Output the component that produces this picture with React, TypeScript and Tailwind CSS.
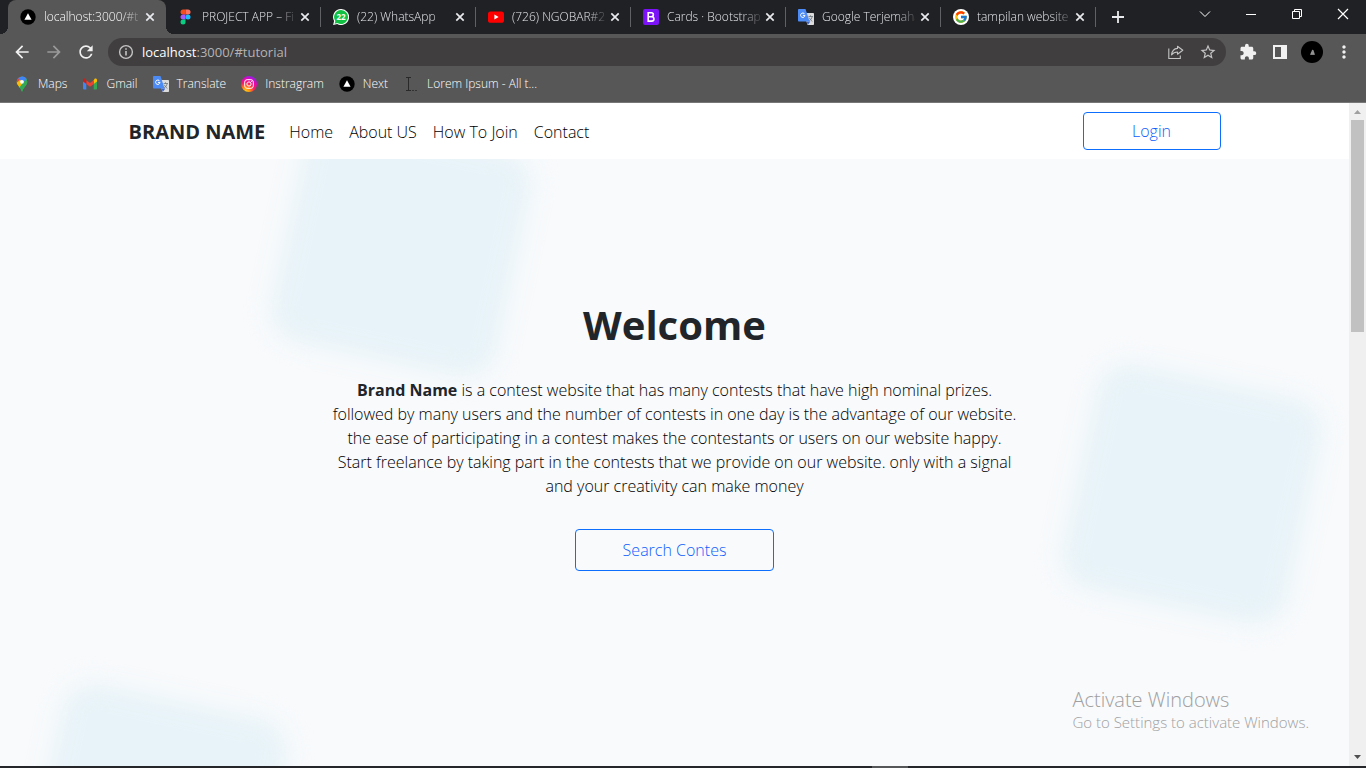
import type { ReactNode } from "react";
import { FcGoogle } from "react-icons/fc";
import { MdArrowBack, MdArrowForward, MdExtension, MdMoreVert, MdRefresh, MdStarBorder } from "react-icons/md";

function NextIcon() {
  return (
    <svg viewBox="0 0 16 16" className="size-4 shrink-0" aria-hidden="true">
      <circle cx="8" cy="8" r="7.7" fill="#000" />
      <path d="M8 4.2 11.6 10.8H4.4Z" fill="#fff" />
    </svg>
  );
}

function FigmaIcon() {
  return (
    <svg viewBox="0 0 16 16" className="size-4 shrink-0" aria-hidden="true">
      <path d="M7.500 .5H5a2.500 2.500 0 0 0 0 5h2.500Z" fill="#f24e1e" />
      <path d="M7.500 .5H10a2.500 2.500 0 0 1 0 5H7.500Z" fill="#ff7262" />
      <path d="M7.500 5.500H5a2.500 2.500 0 0 0 0 5h2.500Z" fill="#a259ff" />
      <circle cx="10" cy="8" r="2.500" fill="#1abcfe" />
      <path d="M7.500 10.500H5A2.500 2.500 0 1 0 7.500 13Z" fill="#0acf83" />
    </svg>
  );
}

function WhatsAppIcon() {
  return (
    <svg viewBox="0 0 16 16" className="size-4 shrink-0" aria-hidden="true">
      <path d="M8 0a8 8 0 1 1-3.8 15L.1 16l1-4A8 8 0 0 1 8 0Z" fill="#fff" />
      <path d="M8 1a7 7 0 1 1-3.6 13l-2.8.7.7-2.8A7 7 0 0 1 8 1Z" fill="#10c143" />
      <text x="8" y="10.8" textAnchor="middle" fontSize="8" fontWeight="700" fill="#fff" fontFamily="Open Sans, sans-serif">22</text>
    </svg>
  );
}

function YouTubeIcon() {
  return (
    <svg viewBox="0 0 16 16" className="size-4 shrink-0" aria-hidden="true">
      <rect x="0" y="2.4" width="16" height="11.4" rx="2.6" fill="#f00" />
      <path d="M6.4 5.6v5L10.6 8.1Z" fill="#fff" />
    </svg>
  );
}

function BootstrapIcon() {
  return (
    <svg viewBox="0 0 16 16" className="size-4 shrink-0" aria-hidden="true">
      <rect width="16" height="16" rx="2" fill="#7b12f8" />
      <path d="M5.200 3.800h3.200a1.900 1.900 0 0 1 0 3.900H5.200h3.500a2.200 2.200 0 0 1 0 4.400H5.200Z" fill="none" stroke="#fff" strokeWidth="1.600" />
    </svg>
  );
}

function TranslateIcon() {
  return (
    <svg viewBox="0 0 16 16" className="size-4 shrink-0" aria-hidden="true">
      <path d="M6 4h9.200q.8 0 .8.8v10.400q0 .8-.8.8H9.500Z" fill="#dcdcdc" />
      <path d="M8.500 12.600 9.800 16l2.500-3.400Z" fill="#3b62c6" />
      <path d="M.8 0h6.700l4.100 12.600H.8q-.8 0-.8-.8V.8Q0 0 .8 0Z" fill="#4c8bf5" />
      <path d="M6.700 5.100A2.200 2.200 0 1 0 7 6.400H4.900" fill="none" stroke="#fff" strokeWidth="1" />
      <path d="M10.500 7.500h4.500M12.500 6.300v1.200M14.200 7.600c-.5 2-1.600 3.400-3 4.300M11.300 8.800c.6 1.600 1.800 2.700 3.100 3.700" fill="none" stroke="#68747b" strokeWidth=".8" />
    </svg>
  );
}

function MapsIcon() {
  return (
    <svg viewBox="0 0 16 16" className="size-4 shrink-0" aria-hidden="true">
      <defs>
        <clipPath id="pin">
          <path d="M8 .5a5.300 5.300 0 0 1 5.300 5.300c0 2-1 3.300-2.400 5C9.600 12.400 8.800 13.600 8.500 15q-.5 1.300-1 0c-.3-1.400-1.100-2.600-2.400-4.200C3.700 9.100 2.700 7.800 2.700 5.800A5.300 5.300 0 0 1 8 .5Z" />
        </clipPath>
      </defs>
      <g clipPath="url(#pin)">
        <rect width="16" height="16" fill="#34a853" />
        <path d="M0 0h8L5 5 2 8H0Z" fill="#ea4335" />
        <path d="M4 2 8 0h6v3L8 8Z" fill="#4285f4" />
        <path d="M0 9 6 4l5 3-6 6Z" fill="#fbbc04" />
        <path d="M8 0h5l2 3-7 6Z" fill="#4285f4" />
        <path d="M13 2 4 13l4 3 7-6Z" fill="#34a853" />
      </g>
      <circle cx="8" cy="5.800" r="1.900" fill="#fff" />
    </svg>
  );
}

function GmailIcon() {
  return (
    <svg viewBox="0 0 16 16" className="size-4 shrink-0" aria-hidden="true">
      <path d="M1 4.500 4.300 7v6.500H2q-1 0-1-1Z" fill="#4285f4" />
      <path d="M15 4.500 11.700 7v6.500H14q1 0 1-1Z" fill="#34a853" />
      <path d="M11.700 4.200v3.700L15 5.400V4c0-1.400-1.500-1.900-2.400-1.200Z" fill="#fbbc04" />
      <path d="M4.300 4.200 8 7l3.700-2.800v3.700L8 10.700 4.300 7.900Z" fill="#ea4335" />
      <path d="M4.300 4.200v3.700L1 5.400V4c0-1.400 1.500-1.900 2.400-1.200Z" fill="#c5221f" />
    </svg>
  );
}

function InstagramIcon() {
  return (
    <svg viewBox="0 0 16 16" className="size-4 shrink-0" aria-hidden="true">
      <defs>
        <radialGradient id="insta" cx=".28" cy="1" r="1.050">
          <stop offset="0" stopColor="#ffd91a" />
          <stop offset=".28" stopColor="#ff8a12" />
          <stop offset=".55" stopColor="#ff1668" />
          <stop offset=".82" stopColor="#d808bc" />
          <stop offset="1" stopColor="#8b20ee" />
        </radialGradient>
      </defs>
      <circle cx="8" cy="8" r="8" fill="url(#insta)" />
      <rect x="3.700" y="3.700" width="8.600" height="8.600" rx="2.400" fill="none" stroke="#fff" strokeWidth="1" />
      <circle cx="8" cy="8" r="2.100" fill="none" stroke="#fff" strokeWidth="1" />
      <circle cx="10.500" cy="5.500" r=".6" fill="#fff" />
    </svg>
  );
}

function LoremIcon() {
  return (
    <svg viewBox="0 0 16 16" className="size-4 shrink-0" aria-hidden="true" fill="none" stroke="#292929">
      <path d="M3 1.500h5M5.500 1.500v13M3 14.500h5" />
      <path d="M9 14.500h2M12 14.500h2" stroke="#333" />
    </svg>
  );
}

function GoogleIcon() {
  return (
    <span className="flex size-4 shrink-0 items-center justify-center rounded-full bg-white">
      <FcGoogle className="size-3.5" />
    </span>
  );
}

function CloseGlyph() {
  return (
    <svg viewBox="0 0 16 16" className="size-4" fill="none" stroke="#e8eaed" strokeWidth="1.7" aria-hidden="true">
      <path d="m4.300 4.300 7.400 7.400M11.700 4.300l-7.400 7.400" />
    </svg>
  );
}

const tabs: { title: string; icon: ReactNode }[] = [
  { title: "localhost:3000/#t", icon: <NextIcon /> },
  { title: "PROJECT APP – Fi", icon: <FigmaIcon /> },
  { title: "(22) WhatsApp", icon: <WhatsAppIcon /> },
  { title: "(726) NGOBAR#2", icon: <YouTubeIcon /> },
  { title: "Cards · Bootstrap", icon: <BootstrapIcon /> },
  { title: "Google Terjemaha", icon: <TranslateIcon /> },
  { title: "tampilan website", icon: <GoogleIcon /> },
];

const bookmarks: { title: string; icon: ReactNode }[] = [
  { title: "Maps", icon: <MapsIcon /> },
  { title: "Gmail", icon: <GmailIcon /> },
  { title: "Translate", icon: <TranslateIcon /> },
  { title: "Instragram", icon: <InstagramIcon /> },
  { title: "Next", icon: <NextIcon /> },
  { title: "Lorem Ipsum - All t...", icon: <LoremIcon /> },
];

function TabStrip() {
  return (
    <div className="flex h-[34px] bg-[#202124] pl-2">
      <div className="flex min-w-0">
        {tabs.map((tab, i) => (
          <div
            key={tab.title}
            className={
              i === 0
                ? "relative flex w-[158px] items-center rounded-t-lg bg-[#575757] pr-2 pl-3 text-white before:absolute before:bottom-0 before:-left-2 before:size-2 before:bg-[radial-gradient(circle_at_0_0,#202124_8px,#575757_8px)] after:absolute after:-right-2 after:bottom-0 after:size-2 after:bg-[radial-gradient(circle_at_100%_0,#202124_8px,#575757_8px)]"
                : "relative flex w-[155px] items-center pr-2 pl-3 text-[#e4e6e9] after:absolute after:top-[7px] after:right-0 after:h-5 after:w-px after:bg-[#606164]"
            }
          >
            <button className="flex min-w-0 flex-1 items-center gap-2 text-left">
              {tab.icon}
              <span className="min-w-0 flex-1 mask-r-from-80% mask-r-to-105% font-[350] whitespace-nowrap">{tab.title}</span>
            </button>
            <button aria-label={`Close ${tab.title}`} className="ml-0.5">
              <CloseGlyph />
            </button>
          </div>
        ))}
      </div>
      <button aria-label="New tab" className="flex w-11 items-center justify-center">
        <svg viewBox="0 0 16 16" className="size-4" fill="none" stroke="#e8eaed" strokeWidth="1.8">
          <path d="M8 2v12M2 8h12" />
        </svg>
      </button>
      <div className="ml-auto flex h-7 shrink-0">
        <button aria-label="Search tabs" className="flex w-[46px] items-center justify-center">
          <svg viewBox="0 0 16 16" className="size-4" fill="none" stroke="#fff">
            <path d="m3 5.500 5 5 5-5" />
          </svg>
        </button>
        <button aria-label="Minimize" className="flex w-[46px] items-center justify-center">
          <svg viewBox="0 0 16 16" className="size-4" fill="none" stroke="#fff">
            <path d="M3 8.500h10" />
          </svg>
        </button>
        <button aria-label="Restore" className="flex w-[46px] items-center justify-center">
          <svg viewBox="0 0 16 16" className="size-4" fill="none" stroke="#fff">
            <path d="M3.500 5.500h7v7h-7ZM5.500 5.500v-2h7v7h-2" />
          </svg>
        </button>
        <button aria-label="Close window" className="flex w-[46px] items-center justify-center">
          <svg viewBox="0 0 16 16" className="size-4" fill="none" stroke="#fff" strokeWidth="1.200">
            <path d="m3 3 10 10M13 3 3 13" />
          </svg>
        </button>
      </div>
    </div>
  );
}

function Toolbar() {
  return (
    <div className="flex h-9 items-center bg-[#575757] pr-1.5 pl-1.5 text-[#f1f1f1]">
      <button aria-label="Back" className="flex w-8 justify-center">
        <MdArrowBack className="size-5" />
      </button>
      <button aria-label="Forward" className="flex w-8 justify-center text-[#9a9a9a]">
        <MdArrowForward className="size-5" />
      </button>
      <button aria-label="Reload" className="flex w-8 justify-center">
        <MdRefresh className="size-5" />
      </button>
      <div className="ml-1.5 flex h-7 flex-1 items-center rounded-full bg-[#413e40] pr-0.5 pl-2.5 text-sm">
        <svg viewBox="0 0 16 16" className="size-4" fill="none" stroke="#c4c4c4" strokeWidth="1.400" aria-hidden="true">
          <circle cx="8" cy="8" r="6.400" />
          <path d="M8 7v4.500M8 4.300v1.500" strokeWidth="1.600" />
        </svg>
        <label htmlFor="address" className="pl-2 text-[13px] text-white">localhost</label>
        <input id="address" defaultValue=":3000/#tutorial" className="min-w-0 flex-1 bg-transparent text-[13px] text-[#b4b3b4] outline-none" />
        <button aria-label="Share" className="flex w-8 justify-center">
          <svg viewBox="0 0 16 16" className="size-4" fill="none" stroke="#c4c4c4" strokeWidth="1.100">
            <path d="M.8 4.500v10h11.500v-3" />
            <path d="M9.500 2.200 14.800 6.200 9.500 10.200V8C6.800 8 5 8.800 3.500 10.800 4 7.200 6 4.700 9.500 4.400Z" strokeLinejoin="round" />
          </svg>
        </button>
        <button aria-label="Bookmark this page" className="flex w-8 justify-center text-[#c4c4c4]">
          <MdStarBorder className="size-[18px]" />
        </button>
      </div>
      <button aria-label="Extensions" className="ml-1.5 flex w-8 justify-center">
        <MdExtension className="size-[18px]" />
      </button>
      <button aria-label="Side panel" className="flex w-8 justify-center">
        <svg viewBox="0 0 16 16" className="size-4">
          <path d="M1 1h14v14H1ZM3 3v10h6V3Z" fill="#f1f1f1" fillRule="evenodd" />
        </svg>
      </button>
      <button aria-label="Profile" className="flex w-8 justify-center">
        <svg viewBox="0 0 22 22" className="size-[22px]">
          <circle cx="11" cy="11" r="11" fill="#000" />
          <path d="m11.500 9-2 4.500h4L12 9ZM10 12h3" fill="#888" stroke="#aaa" strokeWidth=".6" />
        </svg>
      </button>
      <button aria-label="Menu" className="flex w-8 justify-center">
        <MdMoreVert className="size-5" />
      </button>
    </div>
  );
}

function BookmarksBar() {
  return (
    <div className="flex h-[33px] items-center gap-[15px] border-b border-[#777] bg-[#575757] pb-1 pl-3.5 font-[350] text-white">
      {bookmarks.map((b) => (
        <a key={b.title} href="#" className="flex items-center gap-2 whitespace-nowrap">
          {b.icon}
          {b.title}
        </a>
      ))}
    </div>
  );
}

function Navbar() {
  return (
    <header className="relative z-10 bg-white">
      <nav className="mx-auto flex h-14 max-w-[1140px] items-center px-6">
        <a href="#" className="pt-0.5 text-xl font-bold whitespace-nowrap text-[#212529]">BRAND NAME</a>
        <div className="ml-6 flex gap-4 pt-0.5 whitespace-nowrap">
          <a href="#">Home</a>
          <a href="#about">About US</a>
          <a href="#tutorial">How To Join</a>
          <a href="#contact">Contact</a>
        </div>
        <button className="ml-auto h-[38px] w-[138px] rounded border border-[#0d6efd] text-[#0d5efd]">Login</button>
      </nav>
    </header>
  );
}

function Hero() {
  return (
    <section className="relative flex flex-1 flex-col items-center overflow-hidden bg-[#f8fafc] pt-[142px] text-center">
      <div className="absolute top-[-26px] left-[287px] size-[228px] rotate-12 rounded-[32px] bg-[#e7f3f8] blur-[12px]" />
      <div className="absolute top-[221px] right-[43px] size-[228px] rotate-12 rounded-[32px] bg-[#e7f3f8] blur-[12px]" />
      <div className="absolute top-[541px] left-[43px] size-[228px] rotate-12 rounded-[32px] bg-[#e7f3f8] blur-[12px]" />
      <h1 className="relative text-[40px] leading-12 font-bold text-[#212529]">Welcome</h1>
      <p className="relative mt-[29px] leading-6">
        <strong className="font-bold text-[#212529]">Brand Name</strong> is a contest website that has many contests that have high nominal prizes.
        <br />
        followed by many users and the number of contests in one day is the advantage of our website.
        <br />
        the ease of participating in a contest makes the contestants or users on our website happy.
        <br />
        Start freelance by taking part in the contests that we provide on our website. only with a signal
        <br />
        and your creativity can make money
      </p>
      <button className="relative mt-[31px] h-[42px] w-[199px] rounded border border-[#0d6efd] text-[#0d5efd]">Search Contes</button>
    </section>
  );
}

function Scrollbar() {
  return (
    <div className="flex w-[17px] shrink-0 flex-col items-center bg-[#f0f0f0]" aria-hidden="true">
      <svg viewBox="0 0 17 17" className="size-[17px]">
        <path d="M5 11h7L8.500 7Z" fill="#a0a0a0" />
      </svg>
      <div className="h-[212px] w-[13px] bg-[#c1c1c1]" />
      <svg viewBox="0 0 17 17" className="mt-auto size-[17px]">
        <path d="M5 6h7L8.500 10Z" fill="#505050" />
      </svg>
    </div>
  );
}

export default function App() {
  return (
    <div className="relative flex min-h-screen flex-col font-['Open_Sans',sans-serif] text-xs">
      <TabStrip />
      <Toolbar />
      <BookmarksBar />
      <div className="flex flex-1">
        <main className="flex min-w-0 flex-1 flex-col text-base font-light text-black">
          <Navbar />
          <Hero />
        </main>
        <Scrollbar />
      </div>
      <div className="flex h-0.5 bg-[#24262a]">
        <div className="ml-[872px] w-9 bg-[#555759]" />
      </div>
      <div className="pointer-events-none absolute right-[57px] bottom-9 z-20 font-light text-[#9fa0a1]">
        <p className="text-xl leading-6">Activate Windows</p>
        <p className="text-[15px] leading-5">Go to Settings to activate Windows.</p>
      </div>
    </div>
  );
}
